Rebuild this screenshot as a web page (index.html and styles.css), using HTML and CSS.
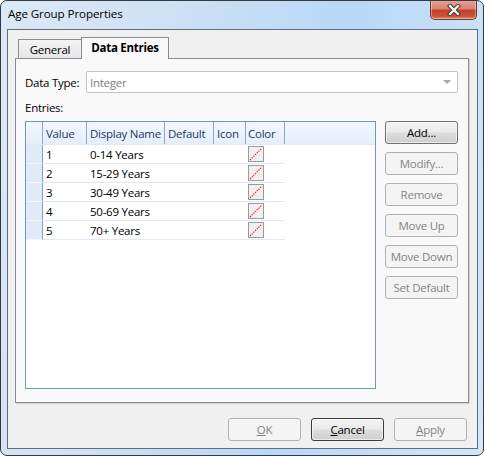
FILE: index.html
```html
<!DOCTYPE html>
<html>
<head>
<meta charset="utf-8">
<link rel="stylesheet" href="styles.css">
</head>
<body>
<div class="window">
  <div class="titlebar">
    <span class="title">Age Group Properties</span>
    <div class="close">
      <svg width="14" height="12" viewBox="0 0 14 12">
        <path d="M3 2 L11 10 M11 2 L3 10" stroke="#3b3b3b" stroke-width="4.2" stroke-linecap="square" fill="none"/>
        <path d="M3 2 L11 10 M11 2 L3 10" stroke="#ffffff" stroke-width="2.2" stroke-linecap="square" fill="none"/>
      </svg>
    </div>
  </div>
  <div class="client">
    <div class="tabs">
      <div class="tab">General</div>
      <div class="tab active">Data Entries</div>
    </div>
    <div class="panel">
      <div class="field-row">
        <span class="label">Data Type:</span>
        <div class="combo"><span class="combo-text">Integer</span><span class="arrow"></span></div>
      </div>
      <div class="label entries-label">Entries:</div>
      <div class="entries">
        <div class="grid">
          <div class="grid-head">
            <div class="cell c0"></div>
            <div class="cell c1">Value</div>
            <div class="cell c2">Display Name</div>
            <div class="cell c3">Default</div>
            <div class="cell c4">Icon</div>
            <div class="cell c5">Color</div>
          </div>
          <div class="grid-row">
            <div class="cell c0"></div><div class="cell c1">1</div><div class="cell c2">0-14 Years</div><div class="cell c3"></div><div class="cell c4"></div>
            <div class="cell c5"><span class="swatch"><svg width="16" height="16" viewBox="0 0 16 16"><rect x="0.5" y="0.5" width="15" height="15" fill="#f0f0f0" stroke="#9a9a9a"/><path d="M2 14 L14 2" stroke="#ee1c1c" stroke-width="1.1" stroke-dasharray="1.4 1"/></svg></span></div>
          </div>
          <div class="grid-row">
            <div class="cell c0"></div><div class="cell c1">2</div><div class="cell c2">15-29 Years</div><div class="cell c3"></div><div class="cell c4"></div>
            <div class="cell c5"><span class="swatch"><svg width="16" height="16" viewBox="0 0 16 16"><rect x="0.5" y="0.5" width="15" height="15" fill="#f0f0f0" stroke="#9a9a9a"/><path d="M2 14 L14 2" stroke="#ee1c1c" stroke-width="1.1" stroke-dasharray="1.4 1"/></svg></span></div>
          </div>
          <div class="grid-row">
            <div class="cell c0"></div><div class="cell c1">3</div><div class="cell c2">30-49 Years</div><div class="cell c3"></div><div class="cell c4"></div>
            <div class="cell c5"><span class="swatch"><svg width="16" height="16" viewBox="0 0 16 16"><rect x="0.5" y="0.5" width="15" height="15" fill="#f0f0f0" stroke="#9a9a9a"/><path d="M2 14 L14 2" stroke="#ee1c1c" stroke-width="1.1" stroke-dasharray="1.4 1"/></svg></span></div>
          </div>
          <div class="grid-row">
            <div class="cell c0"></div><div class="cell c1">4</div><div class="cell c2">50-69 Years</div><div class="cell c3"></div><div class="cell c4"></div>
            <div class="cell c5"><span class="swatch"><svg width="16" height="16" viewBox="0 0 16 16"><rect x="0.5" y="0.5" width="15" height="15" fill="#f0f0f0" stroke="#9a9a9a"/><path d="M2 14 L14 2" stroke="#ee1c1c" stroke-width="1.1" stroke-dasharray="1.4 1"/></svg></span></div>
          </div>
          <div class="grid-row">
            <div class="cell c0"></div><div class="cell c1">5</div><div class="cell c2">70+ Years</div><div class="cell c3"></div><div class="cell c4"></div>
            <div class="cell c5"><span class="swatch"><svg width="16" height="16" viewBox="0 0 16 16"><rect x="0.5" y="0.5" width="15" height="15" fill="#f0f0f0" stroke="#9a9a9a"/><path d="M2 14 L14 2" stroke="#ee1c1c" stroke-width="1.1" stroke-dasharray="1.4 1"/></svg></span></div>
          </div>
        </div>
        <div class="side-buttons">
          <div class="btn">Add...</div>
          <div class="btn disabled">Modify...</div>
          <div class="btn disabled">Remove</div>
          <div class="btn disabled">Move Up</div>
          <div class="btn disabled">Move Down</div>
          <div class="btn disabled">Set Default</div>
        </div>
      </div>
    </div>
    <div class="dialog-buttons">
      <div class="btn disabled"><u>O</u>K</div>
      <div class="btn default"><u>C</u>ancel</div>
      <div class="btn disabled"><u>A</u>pply</div>
    </div>
  </div>
</div>
</body>
</html>
```

FILE: styles.css
```css
* { box-sizing: border-box; }
html, body { margin: 0; padding: 0; }
body {
  width: 484px;
  height: 456px;
  font-family: "Open Sans", "Noto Sans", sans-serif;
  font-size: 11.5px;
  letter-spacing: -0.25px;
  color: #000;
  background: #ffffff;
}
.window {
  width: 484px;
  height: 456px;
  border: 1px solid #343a42;
  border-radius: 7px;
  background: linear-gradient(100deg, #dce9f6 0%, #c9def4 40%, #b8d8f7 62%, #d3e6fa 100%);
  display: flex;
  flex-direction: column;
  overflow: hidden;
}
.titlebar {
  height: 28px;
  display: flex;
  align-items: flex-start;
  padding-left: 7px;
}
.title {
  margin-top: 5px;
  font-size: 11.6px;
  letter-spacing: -0.1px;
  color: #000;
}
.close {
  margin-left: auto;
  margin-right: 6px;
  margin-top: -1px;
  width: 47px;
  height: 20px;
  border: 1px solid #6e3a33;
  border-top: none;
  border-radius: 0 0 5px 5px;
  background: linear-gradient(#e6a394 0%, #d88473 45%, #c3412b 55%, #cc5238 85%, #e08a6c 100%);
  display: flex;
  align-items: center;
  justify-content: center;
  box-shadow: inset 0 0 0 1px rgba(255,255,255,0.35);
}
.close svg { display: block; margin-top: 1px; }
.client {
  flex: 1;
  margin: 0 5px 6px 6px;
  border: 1px solid #5d6e82;
  background: #f0f0f0;
  padding: 7px 8px 7px 7px;
  display: flex;
  flex-direction: column;
}
.tabs {
  display: flex;
  align-items: flex-end;
  height: 21px;
  padding-left: 3px;
  position: relative;
  z-index: 1;
}
.tab {
  width: 64px;
  height: 19px;
  border: 1px solid #898c95;
  border-bottom: none;
  background: linear-gradient(#f3f3f3, #e7e7e7);
  display: flex;
  align-items: center;
  justify-content: center;
  padding-top: 1px;
}
.tab.active {
  width: 88px;
  height: 22px;
  margin-left: -1px;
  margin-bottom: -1px;
  background: #f9f9f9;
  font-weight: bold;
  padding-top: 0;
  padding-bottom: 3px;
}
.panel {
  height: 345px;
  border: 1px solid #898c95;
  background: #f9f9f9;
  box-shadow: 1px 1px 0 #d0d0d0;
  padding: 12px 10px 13px 9px;
  display: flex;
  flex-direction: column;
}
.field-row {
  display: flex;
  align-items: center;
  height: 22px;
}
.label { color: #000; }
.field-row .label { width: 61px; }
.combo {
  flex: 1;
  height: 22px;
  border: 1px solid #c3c3c3;
  border-radius: 2px;
  background: #fff;
  display: flex;
  align-items: center;
  padding-left: 3px;
  padding-right: 6px;
}
.combo-text { color: #7d7d7d; }
.arrow {
  margin-left: auto;
  width: 0;
  height: 0;
  border-left: 4px solid transparent;
  border-right: 4px solid transparent;
  border-top: 4px solid #a8a8a8;
}
.entries-label {
  margin-top: 7px;
  height: 16px;
  line-height: 16px;
}
.entries {
  margin-top: 5px;
  flex: 1;
  display: flex;
  gap: 9px;
}
.grid {
  width: 351px;
  height: 268px;
  border: 1px solid #6d95cc;
  background: #fff;
}
.grid-head {
  display: flex;
  height: 23px;
  background: linear-gradient(#f3f7fd, #e5eefa);
  border-bottom: 1px solid #dfe8f5;
}
.grid-head .cell {
  color: #1d3662;
  border-right: 1px solid #86a8db;
}
.grid-row {
  display: flex;
  height: 19px;
}
.cell {
  display: flex;
  align-items: center;
  padding-left: 3px;
  white-space: nowrap;
  overflow: hidden;
}
.grid-row .cell { border-bottom: 1px solid #dfe8f5; }
.c0 { width: 17px; }
.c1 { width: 44px; }
.c2 { width: 78px; }
.c3 { width: 49px; }
.c4 { width: 32px; }
.c5 { width: 39px; padding-left: 2px; }
.grid-row .c0 {
  background: #e1eaf7;
  border-right: 1px solid #7d9fd6;
  border-bottom: 1px solid #f3f6fb;
}
.swatch { display: flex; }
.swatch svg { display: block; }
.side-buttons {
  display: flex;
  flex-direction: column;
  gap: 8px;
}
.btn {
  width: 73px;
  height: 23px;
  border: 1px solid #707070;
  border-radius: 3px;
  background: linear-gradient(#f2f2f2 0%, #ebebeb 48%, #dddddd 52%, #cfcfcf 100%);
  box-shadow: inset 0 0 0 1px rgba(255,255,255,0.6);
  display: flex;
  align-items: center;
  justify-content: center;
  color: #000;
}
.btn.disabled {
  border-color: #adb2b5;
  background: #f4f4f4;
  box-shadow: none;
  color: #838383;
}
.btn.default { border-color: #3c3c3c; }
.dialog-buttons {
  margin-top: 15px;
  display: flex;
  justify-content: flex-end;
  gap: 10px;
  padding-right: 2px;
}
u { text-decoration: underline; text-underline-offset: 1px; }
```
